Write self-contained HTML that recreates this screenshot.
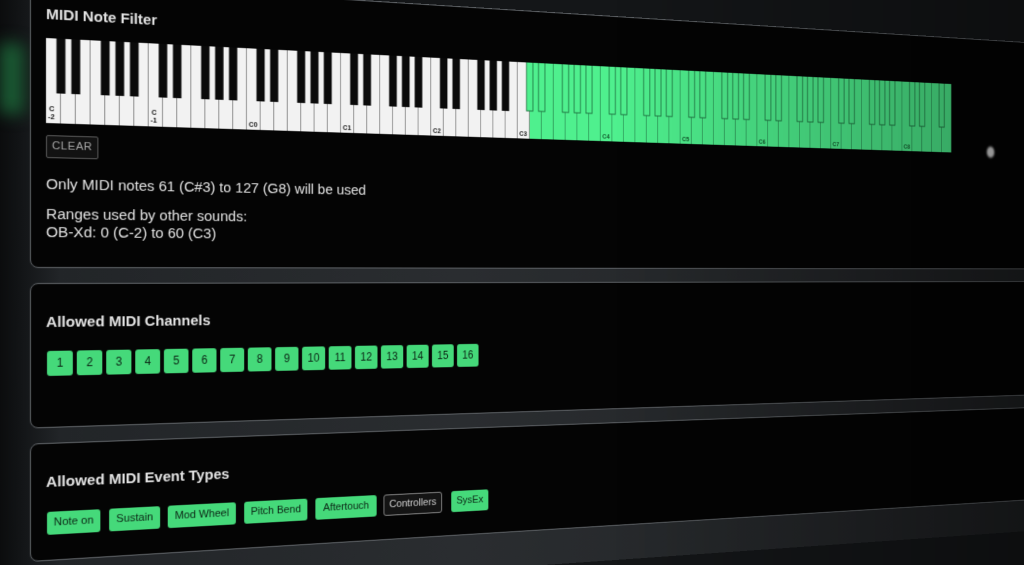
<!DOCTYPE html>
<html><head><meta charset="utf-8">
<style>
html,body{margin:0;padding:0;width:1024px;height:565px;overflow:hidden;background:#141618;}
body{font-family:"Liberation Sans",sans-serif;position:relative;}
#flat{position:absolute;left:0;top:0;width:1450px;height:600px;transform-origin:0 0;
transform:matrix3d(1.009913,0.05905,0,0.0002155, 0,1,0,0, 0,0,1,0, -0.456,-2.716,0,0.990087);
background:linear-gradient(90deg,#0b0c0d 0,#121416 20px,#222528 60px,#2a2d30 500px,#1e2022 1300px);}
.panel{position:absolute;left:30px;width:1500px;background:#040404;border:1.5px solid #62666a;border-radius:8px;box-sizing:border-box;}
.t{position:absolute;color:#e4e4e4;white-space:nowrap;}
.h{font-weight:bold;font-size:15.5px;}
.ch{position:absolute;top:351px;height:25px;background:#45d97a;border-radius:3px;color:#0b2414;font-size:12px;line-height:25px;text-align:center;}
.ev{position:absolute;top:512px;height:23px;background:#45d97a;border-radius:3px;color:#0b2414;font-size:11.5px;line-height:23px;text-align:center;}
#vig{position:absolute;left:0;top:0;width:1024px;height:565px;pointer-events:none;
background:linear-gradient(90deg,rgba(0,0,0,0) 60%,rgba(0,0,0,0.35) 100%);}
</style></head><body>
<div id="flat">
  <div style="position:absolute;left:0;top:45px;width:24px;height:70px;background:#1a5a33;filter:blur(8px);"></div>
  <div class="panel" style="top:-20px;height:288px;"></div>
  <div class="panel" style="top:283px;height:145px;"></div>
  <div class="panel" style="top:443px;height:118px;"></div>

  <div class="t h" style="left:46px;top:6px;">MIDI Note Filter</div>

  <svg style="position:absolute;left:46px;top:38px;" width="1130" height="86" viewBox="0 0 1130 86">
    <defs>
      <pattern id="wl" x="0" y="0" width="15" height="86" patternUnits="userSpaceOnUse">
        <rect x="14" y="0" width="1" height="86" fill="#8a8a8a"/>
      </pattern>
      <pattern id="gl" x="0" y="0" width="15" height="86" patternUnits="userSpaceOnUse">
        <rect x="14" y="0" width="1" height="86" fill="#2f9a5a"/>
      </pattern>
      <pattern id="bk" x="0" y="0" width="105" height="86" patternUnits="userSpaceOnUse">
        <rect x="10.5" y="0" width="9" height="55" fill="#0a0a0a"/>
        <rect x="25.5" y="0" width="9" height="55" fill="#0a0a0a"/>
        <rect x="55.5" y="0" width="9" height="55" fill="#0a0a0a"/>
        <rect x="70.5" y="0" width="9" height="55" fill="#0a0a0a"/>
        <rect x="85.5" y="0" width="9" height="55" fill="#0a0a0a"/>
      </pattern>
      <pattern id="gk" x="0" y="0" width="105" height="86" patternUnits="userSpaceOnUse">
        <rect x="11" y="-1" width="8" height="55" fill="#4ff08e" stroke="#1d6e3d" stroke-width="1"/>
        <rect x="26" y="-1" width="8" height="55" fill="#4ff08e" stroke="#1d6e3d" stroke-width="1"/>
        <rect x="56" y="-1" width="8" height="55" fill="#4ff08e" stroke="#1d6e3d" stroke-width="1"/>
        <rect x="71" y="-1" width="8" height="55" fill="#4ff08e" stroke="#1d6e3d" stroke-width="1"/>
        <rect x="86" y="-1" width="8" height="55" fill="#4ff08e" stroke="#1d6e3d" stroke-width="1"/>
      </pattern>
    </defs>
    <rect x="0" y="0" width="540" height="85" fill="#f2f2f2"/>
    <rect x="0" y="0" width="540" height="85" fill="url(#wl)"/>
    <rect x="540" y="0" width="585" height="85" fill="#4ff08e"/>
    <rect x="540" y="0" width="585" height="85" fill="url(#gl)"/>
    <rect x="0" y="0" width="535" height="56" fill="url(#bk)"/>
    <rect x="535" y="0" width="585" height="56" fill="url(#gk)"/>
    <g font-family="Liberation Sans, sans-serif" font-size="7.5" font-weight="bold" fill="#111">
      <text x="3" y="73">C</text><text x="2" y="81">-2</text>
      <text x="108" y="73">C</text><text x="107" y="81">-1</text>
      <text x="212" y="82">C0</text>
      <text x="317" y="82">C1</text>
      <text x="422" y="82">C2</text>
      <text x="527" y="82">C3</text>
      <text x="632" y="82" fill="#145a2e">C4</text>
      <text x="737" y="82" fill="#145a2e">C5</text>
      <text x="842" y="82" fill="#145a2e">C6</text>
      <text x="947" y="82" fill="#145a2e">C7</text>
      <text x="1052" y="82" fill="#145a2e">C8</text>
    </g>
  </svg>
  <div style="position:absolute;left:1226px;top:114px;width:12px;height:14px;border-radius:50%;background:#ddd;filter:blur(1.5px);"></div>

  <div style="position:absolute;left:46px;top:135px;width:51px;height:21px;border:1px solid #5a5a5a;border-radius:2px;background:#121212;color:#a8a8a8;font-size:11.5px;line-height:21px;text-align:center;letter-spacing:0.5px;">CLEAR</div>

  <div class="t" style="left:46px;top:176px;font-size:15.5px;">Only MIDI notes 61 (C#3) to 127 (G8) will be used</div>
  <div class="t" style="left:46px;top:206px;font-size:15.5px;">Ranges used by other sounds:</div>
  <div class="t" style="left:46px;top:224px;font-size:15.5px;">OB-Xd: 0 (C-2) to 60 (C3)</div>

  <div class="t h" style="left:46px;top:314px;">Allowed MIDI Channels</div>
  <div class="ch" style="left:47px;width:26px;">1</div>
  <div class="ch" style="left:77px;width:26px;">2</div>
  <div class="ch" style="left:107px;width:26px;">3</div>
  <div class="ch" style="left:137px;width:26px;">4</div>
  <div class="ch" style="left:167px;width:26px;">5</div>
  <div class="ch" style="left:197px;width:26px;">6</div>
  <div class="ch" style="left:227px;width:26px;">7</div>
  <div class="ch" style="left:257px;width:26px;">8</div>
  <div class="ch" style="left:287px;width:26px;">9</div>
  <div class="ch" style="left:317px;width:26px;">10</div>
  <div class="ch" style="left:347px;width:26px;">11</div>
  <div class="ch" style="left:377px;width:26px;">12</div>
  <div class="ch" style="left:407px;width:26px;">13</div>
  <div class="ch" style="left:437px;width:26px;">14</div>
  <div class="ch" style="left:467px;width:26px;">15</div>
  <div class="ch" style="left:497px;width:26px;">16</div>

  <div class="t h" style="left:46px;top:474px;">Allowed MIDI Event Types</div>
  <div class="ev" style="left:47px;width:54px;">Note on</div>
  <div class="ev" style="left:110px;width:53px;">Sustain</div>
  <div class="ev" style="left:171px;width:73px;">Mod Wheel</div>
  <div class="ev" style="left:253px;width:70px;">Pitch Bend</div>
  <div class="ev" style="left:332px;width:70px;">Aftertouch</div>
  <div class="ev" style="left:410px;width:69px;background:#141414;border:1px solid #8a8a8a;color:#d0d0d0;box-sizing:border-box;line-height:21px;">Controllers</div>
  <div class="ev" style="left:490px;width:45px;">SysEx</div>
</div>
<div id="vig"></div>
</body></html>
